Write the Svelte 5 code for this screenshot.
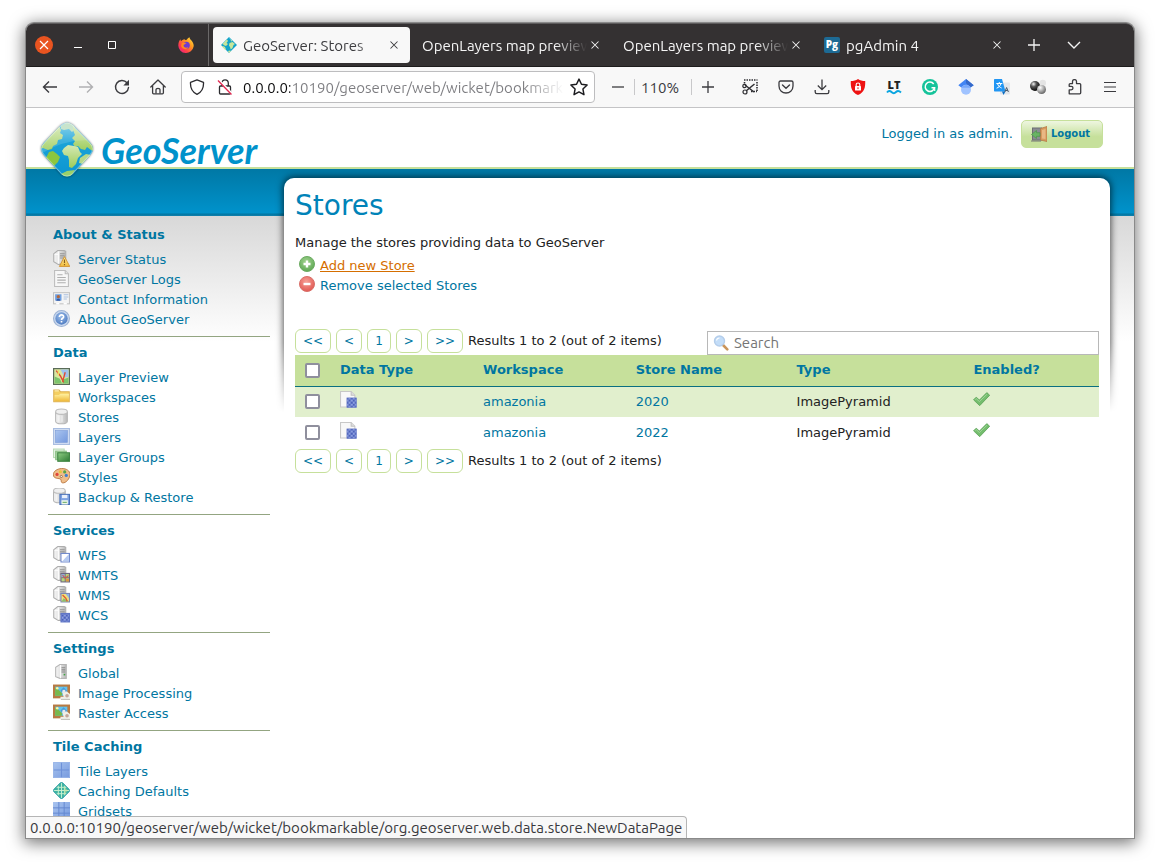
<script>
  const tabs = [
    { title: 'GeoServer: Stores', icon: 'globe', active: true },
    { title: 'OpenLayers map preview', icon: null, active: false },
    { title: 'OpenLayers map preview', icon: null, active: false },
    { title: 'pgAdmin 4', icon: 'pg', active: false }
  ];

  const navButtons = [
    { icon: 'back', label: 'Back' },
    { icon: 'forward', label: 'Forward' },
    { icon: 'reload', label: 'Reload' },
    { icon: 'home', label: 'Home' }
  ];

  const extensions = [
    { icon: 'snip', label: 'Screenshot' },
    { icon: 'pocket', label: 'Pocket' },
    { icon: 'download', label: 'Downloads' },
    { icon: 'blocker', label: 'Blocker' },
    { icon: 'lt', label: 'Language check' },
    { icon: 'grammar', label: 'Grammar' },
    { icon: 'scholar', label: 'Scholar' },
    { icon: 'translate', label: 'Translate' },
    { icon: 'balls', label: 'Molecules' },
    { icon: 'puzzle', label: 'Extensions' },
    { icon: 'menu', label: 'Menu' }
  ];

  const sections = [
    {
      title: 'About & Status',
      items: [
        ['status', 'Server Status'],
        ['logs', 'GeoServer Logs'],
        ['contact', 'Contact Information'],
        ['help', 'About GeoServer']
      ]
    },
    {
      title: 'Data',
      items: [
        ['preview', 'Layer Preview'],
        ['folder', 'Workspaces'],
        ['database', 'Stores'],
        ['layer', 'Layers'],
        ['groups', 'Layer Groups'],
        ['palette', 'Styles'],
        ['backup', 'Backup & Restore']
      ]
    },
    {
      title: 'Services',
      items: [
        ['wfs', 'WFS'],
        ['wmts', 'WMTS'],
        ['wms', 'WMS'],
        ['wcs', 'WCS']
      ]
    },
    {
      title: 'Settings',
      items: [
        ['server', 'Global'],
        ['image', 'Image Processing'],
        ['image', 'Raster Access']
      ]
    },
    {
      title: 'Tile Caching',
      items: [
        ['tiles', 'Tile Layers'],
        ['cache', 'Caching Defaults'],
        ['grid', 'Gridsets']
      ]
    }
  ];

  const stores = [
    { workspace: 'amazonia', name: '2020', type: 'ImagePyramid' },
    { workspace: 'amazonia', name: '2022', type: 'ImagePyramid' }
  ];

  const pages = ['<<', '<', '1', '>', '>>'];
</script>

{#snippet icon(name, size = 16)}
  <svg class="icon" width={size} height={size} viewBox="0 0 16 16" aria-hidden="true"><use href={'#i-' + name} /></svg>
{/snippet}

{#snippet pager()}
  <nav class="pager" aria-label="Pages">
    {#each pages as page}
      <button type="button">{page}</button>
    {/each}
    <span>Results 1 to 2 (out of 2 items)</span>
  </nav>
{/snippet}

<svg class="sprite" width="0" height="0" aria-hidden="true">
  <defs>
    <linearGradient id="g-fox" x1="1" y1="0" x2="0" y2="1">
      <stop offset="0" stop-color="#fff04a" /><stop offset=".35" stop-color="#ff9a1f" /><stop offset=".7" stop-color="#ff3a4c" /><stop offset="1" stop-color="#e0209a" />
    </linearGradient>
    <linearGradient id="g-sea" x1="0" y1="0" x2="0" y2="1">
      <stop offset="0" stop-color="#7fd0ea" /><stop offset=".35" stop-color="#1aa3d8" /><stop offset="1" stop-color="#0a94d0" />
    </linearGradient>
    <linearGradient id="g-land" x1="0" y1="0" x2="0" y2="1">
      <stop offset="0" stop-color="#d5e9b4" /><stop offset="1" stop-color="#9ccc5a" />
    </linearGradient>
    <linearGradient id="g-grey" x1="0" y1="0" x2="1" y2="0">
      <stop offset="0" stop-color="#f6f6f6" /><stop offset=".5" stop-color="#dedede" /><stop offset="1" stop-color="#b8b8b8" />
    </linearGradient>
    <linearGradient id="g-gold" x1="0" y1="0" x2="0" y2="1">
      <stop offset="0" stop-color="#fff0a0" /><stop offset="1" stop-color="#efb93a" />
    </linearGradient>
    <linearGradient id="g-blue" x1="0" y1="0" x2="1" y2="1">
      <stop offset="0" stop-color="#a9c4ef" /><stop offset="1" stop-color="#7599de" />
    </linearGradient>
    <linearGradient id="g-green" x1="0" y1="0" x2="1" y2="1">
      <stop offset="0" stop-color="#8fce83" /><stop offset="1" stop-color="#2d7a34" />
    </linearGradient>
    <radialGradient id="g-help" cx=".45" cy=".35" r=".7">
      <stop offset="0" stop-color="#9bbdea" /><stop offset="1" stop-color="#4a78bf" />
    </radialGradient>
    <radialGradient id="g-add" cx=".45" cy=".35" r=".7">
      <stop offset="0" stop-color="#a2d38f" /><stop offset="1" stop-color="#5aa551" />
    </radialGradient>
    <radialGradient id="g-del" cx=".45" cy=".35" r=".7">
      <stop offset="0" stop-color="#f6a096" /><stop offset="1" stop-color="#e0544e" />
    </radialGradient>
    <radialGradient id="g-black" cx=".35" cy=".3" r=".7">
      <stop offset="0" stop-color="#f5f5f5" /><stop offset=".4" stop-color="#555" /><stop offset="1" stop-color="#080808" />
    </radialGradient>
    <radialGradient id="g-silver" cx=".35" cy=".3" r=".8">
      <stop offset="0" stop-color="#fff" /><stop offset=".5" stop-color="#aaa" /><stop offset="1" stop-color="#555" />
    </radialGradient>
    <pattern id="p-check" width="4" height="4" patternUnits="userSpaceOnUse">
      <rect width="4" height="4" fill="#8c9fdf" /><rect width="2" height="2" fill="#4d62bb" /><rect x="2" y="2" width="2" height="2" fill="#4d62bb" />
    </pattern>
    <g id="tower">
      <path d="M4.500.500h6l1.500.7v12.300H5L.7 11V3.500z" fill="url(#g-grey)" stroke="#adadad" />
      <path d="M5 1.500v11.500M1.500 4h3" stroke="#fff" stroke-width="1" />
      <path d="M6.500 3.500h4.500M6.500 5.500h4.500M6.500 7.500h4.500" stroke="#959595" />
    </g>
    <g id="drum">
      <path d="M2.500 3.500v9c0 3.200 11 3.200 11 0v-9" fill="url(#g-grey)" stroke="#b5b5b5" />
      <ellipse cx="8" cy="3.500" rx="5.500" ry="2.500" fill="#efefef" stroke="#bdbdbd" />
      <path d="M5.500 7v6M8.500 7v6" stroke="#fff" opacity=".6" />
    </g>

    <symbol id="i-x" viewBox="0 0 16 16"><path d="M4 4l8 8M12 4l-8 8" stroke="currentColor" fill="none" stroke-width="1.200" /></symbol>
    <symbol id="i-min" viewBox="0 0 16 16"><path d="M4 10.500h8" stroke="#fff" /></symbol>
    <symbol id="i-max" viewBox="0 0 16 16"><path d="M4.500 4.500h7v7h-7z" stroke="#fff" fill="none" /></symbol>
    <symbol id="i-fox" viewBox="0 0 16 16">
      <path d="M11.500.3c.2 2 1.500 2.400 2.700 4.200 1 1.500 1.700 3 1.400 5A7.700 7.700 0 0 1 .3 8.500C.3 6 1 4 2.500 2.300c0 .8.200 1.400.6 1.900.7-.9 2-1.400 2.800-1.900C6.500 1.800 7.300 3 8 3.200 9.500 2.500 9.300 1.300 11.500.3z" fill="url(#g-fox)" />
      <circle cx="8.300" cy="8.300" r="3.500" fill="#6f3bd2" />
      <path d="M3.800 6.200c1.700-1 3.500-.7 4.800.1-1.400.2-1.700 1.200-3 1.600-.3 2.500 2.700 3.500 4.700 2.100-1 3.300-6.700 2.600-7.200-.9z" fill="#ff8a20" />
    </symbol>
    <symbol id="i-globe" viewBox="0 0 16 16">
      <path d="M8 0l8 8-8 8-8-8z" fill="#12a3c9" />
      <path d="M3 5l3-2.500 1 1.500-1.500 2L7 7 5 9 3 8.200 1.500 6.800zM2 9l2 1 1 2.500-.8.500L1 9.500zM8.500 6l3-1 2.500 2-1.500 1-1 3-1.800 1.500L9 10 8 8.500zM9.500 2l2 2-1.500.5zM7 14l2-.5 1 .5-2 2z" fill="#c9e69a" />
      <path d="M8 .5l3.300 3.300M4 4.200L1 7.400" stroke="#7fd3e5" stroke-width=".8" />
    </symbol>
    <symbol id="i-pg" viewBox="0 0 16 16">
      <rect width="16" height="16" rx="2" fill="#1d6a94" />
      <text x="8" y="10.500" text-anchor="middle" font-family="Open Sans, sans-serif" font-weight="800" font-size="10" fill="#fff">Pg</text>
    </symbol>
    <symbol id="i-plus" viewBox="0 0 16 16"><path d="M8 2v12M2 8h12" stroke="currentColor" stroke-width="1.300" /></symbol>
    <symbol id="i-minus" viewBox="0 0 16 16"><path d="M2 8h12" stroke="currentColor" stroke-width="1.300" /></symbol>
    <symbol id="i-chevron" viewBox="0 0 16 16"><path d="M2 5l6 6 6-6" stroke="currentColor" fill="none" stroke-width="1.400" /></symbol>
    <symbol id="i-back" viewBox="0 0 16 16"><path d="M15 8H1.500M7 2.500L1.500 8 7 13.500" stroke="#3b3b3f" fill="none" stroke-width="1.400" /></symbol>
    <symbol id="i-forward" viewBox="0 0 16 16"><path d="M1 8h13.500M9 2.500L14.500 8 9 13.500" stroke="#b0b0b2" fill="none" stroke-width="1.400" /></symbol>
    <symbol id="i-reload" viewBox="0 0 16 16">
      <path d="M13 3.800A6.500 6.500 0 1 0 14.500 8.500" stroke="#3b3b3f" fill="none" stroke-width="1.400" stroke-linecap="round" />
      <path d="M15 .8v5.700H9.300z" fill="#3b3b3f" />
    </symbol>
    <symbol id="i-home" viewBox="0 0 16 16">
      <path d="M.8 8L8 1l7.200 7M2.600 6.500v7.300c0 .7.300 1 1 1h8.800c.7 0 1-.3 1-1V6.500" stroke="#3b3b3f" fill="none" stroke-width="1.300" stroke-linejoin="round" stroke-linecap="round" />
      <path d="M6 14.500v-4c0-1.500 4-1.500 4 0v4" stroke="#3b3b3f" fill="none" stroke-width="1.300" />
    </symbol>
    <symbol id="i-shield" viewBox="0 0 16 16"><path d="M8 .8l6.500 2.500c.3 5-1.500 9.700-6.500 12C3 13 1.200 8.300 1.500 3.300z" stroke="#2b2b2f" fill="none" stroke-width="1.300" stroke-linejoin="round" /></symbol>
    <symbol id="i-lock" viewBox="0 0 16 16">
      <path d="M4.800 7V4c0-4.200 6.500-4.200 6.500 0v3M3.500 7h9c.7 0 1 .3 1 1v6c0 .7-.3 1-1 1h-9c-.7 0-1-.3-1-1V8c0-.7.300-1 1-1z" stroke="#2b2b2f" fill="none" stroke-width="1.300" />
      <path d="M2 1.300l13 13.500" stroke="#fff" stroke-width="2.400" /><path d="M1 1.500L14.500 15.500" stroke="#e22850" stroke-width="1.300" />
    </symbol>
    <symbol id="i-star" viewBox="0 0 16 16"><path d="M8 1l2.200 4.600 5 .7-3.700 3.500.9 5L8 12.400l-4.400 2.400.9-5L.8 6.300l5-.7z" stroke="#1b1b1f" fill="none" stroke-width="1.300" stroke-linejoin="round" /></symbol>
    <symbol id="i-snip" viewBox="0 0 16 16">
      <path d="M2 1h13.500M15 3v9M2.500 3v3M9 12.500h6" stroke="#2f2f33" stroke-width="1.600" stroke-dasharray="1.500 1" fill="none" />
      <path d="M3 6l9 7M12.500 5L4 12" stroke="#2f2f33" stroke-width="1.500" />
      <circle cx="2.500" cy="7" r="1.700" fill="none" stroke="#2f2f33" stroke-width="1.200" /><circle cx="3" cy="13" r="2" fill="none" stroke="#2f2f33" stroke-width="1.200" />
    </symbol>
    <symbol id="i-pocket" viewBox="0 0 16 16">
      <path d="M2.500 2h11c.9 0 1.500.6 1.500 1.500V7c0 9.300-14 9.300-14 0V3.500C1 2.600 1.600 2 2.500 2z" stroke="#3b3b3f" fill="none" stroke-width="1.300" />
      <path d="M4.500 6L8 9.200 11.500 6" stroke="#3b3b3f" fill="none" stroke-width="1.400" stroke-linecap="round" />
    </symbol>
    <symbol id="i-download" viewBox="0 0 16 16"><path d="M8 .5v10M3.800 6.500L8 10.700l4.200-4.200M1.200 11v2c0 1 .6 1.600 1.600 1.600h10.400c1 0 1.600-.6 1.600-1.600v-2" stroke="#3b3b3f" fill="none" stroke-width="1.300" /></symbol>
    <symbol id="i-blocker" viewBox="0 0 16 16">
      <path d="M8 0c2 1.500 4.500 2 7.200 2 .3 6-.7 11.500-7.200 14C1.500 13.500.5 8 .8 2 3.500 2 6 1.500 8 0z" fill="#ee1212" />
      <rect x="5" y="7" width="6" height="4.500" rx=".5" fill="#fff" /><path d="M6.200 7V5.500c0-2 3.600-2 3.600 0V7" stroke="#fff" fill="none" stroke-width="1.100" /><path d="M8 8.300v1.800" stroke="#e11" />
    </symbol>
    <symbol id="i-lt" viewBox="0 0 16 16">
      <text x="8" y="9.500" text-anchor="middle" font-family="Open Sans, sans-serif" font-weight="800" font-size="11" fill="#222">LT</text>
      <path d="M1 13.500c1.500-2 3-2 4.500-.5s3 1.500 4.500 0 3-1.500 5 .5" stroke="#0aa5e0" stroke-width="1.900" fill="none" />
    </symbol>
    <symbol id="i-grammar" viewBox="0 0 16 16">
      <circle cx="8" cy="8" r="8" fill="#15c39a" /><path d="M11.700 5A4.700 4.700 0 1 0 12.500 8.700H9.500" stroke="#fff" fill="none" stroke-width="1.500" /><path d="M12.700 8.500v3.500" stroke="#fff" stroke-width="1.200" />
    </symbol>
    <symbol id="i-scholar" viewBox="0 0 16 16">
      <path d="M8 0L.3 6.200l3 2.300h9.400l3-2.300z" fill="#4285f4" /><path d="M8 0l7.700 6.200L12 8.500 8 4z" fill="#3569c9" />
      <circle cx="8" cy="10.700" r="5" fill="#a0c3ff" /><path d="M3.400 8.800C5 5 11 5 12.600 8.800z" fill="#76a7fa" />
    </symbol>
    <symbol id="i-translate" viewBox="0 0 16 16">
      <rect x="6" y="3.500" width="10" height="12" rx="1" fill="#e3e6ea" /><path d="M0 1c0-.6.4-1 1-1h7l3.500 12.500H1c-.6 0-1-.4-1-1z" fill="#2196f3" /><path d="M8 12.500h3.500L9.500 16z" fill="#0d6fc4" />
      <path d="M2.300 4.500h6M5.300 3v1.500M7 4.500c-.6 2.500-2.500 4-4.400 4.700M3.500 4.700C4 6.700 6 8.500 7.600 9" stroke="#fff" fill="none" stroke-width="1" />
      <path d="M10.800 13L12.600 8.500l1.800 4.500M11.400 11.500h2.400" stroke="#4a5a6a" fill="none" />
    </symbol>
    <symbol id="i-balls" viewBox="0 0 16 16">
      <circle cx="12.800" cy="4" r="3.200" fill="#e4e4e4" /><circle cx="5" cy="7" r="5" fill="url(#g-black)" /><circle cx="11.500" cy="10.500" r="4.500" fill="url(#g-silver)" />
    </symbol>
    <symbol id="i-puzzle" viewBox="0 0 16 16"><path d="M2.700 15.200h10.500c.6 0 1-.4 1-1V6c0-.6-.4-1-1-1H10V3c0-2.700-4-2.700-4 0v2H3.700c-.6 0-1 .4-1 1v1.700h2c2.400 0 2.400 3.600 0 3.600h-2z" transform="translate(.5 -.4)" stroke="#3b3b3f" fill="none" stroke-width="1.300" stroke-linejoin="round" /></symbol>
    <symbol id="i-menu" viewBox="0 0 16 16"><path d="M2 3.500h12M2 8h12M2 12.500h12" stroke="#3b3b3f" stroke-width="1.200" /></symbol>

    <symbol id="i-status" viewBox="0 0 16 16">
      <use href="#tower" /><path d="M10.800 6.200l5 9.300H6z" fill="url(#g-gold)" stroke="#d29538" stroke-width=".9" stroke-linejoin="round" /><path d="M10.800 9v3.300M10.800 13.200v1.200" stroke="#8a5c1a" stroke-width="1.100" />
    </symbol>
    <symbol id="i-logs" viewBox="0 0 16 16">
      <path d="M1.500.500h10l3 3v12h-13z" fill="#f7f7f7" stroke="#bdbdbd" /><path d="M11.500.500v3h3" fill="#e2e2e2" stroke="#bdbdbd" />
      <path d="M4 4.500h5M4 7h8M4 9.500h8M4 12h8" stroke="#b0b0b0" />
    </symbol>
    <symbol id="i-contact" viewBox="0 0 16 16">
      <rect x=".5" y="2.500" width="15" height="10.500" fill="#f4f4f4" stroke="#c3c3c3" /><rect x="2" y="4" width="6" height="6" fill="#6f9fe0" /><circle cx="5" cy="6.300" r="1.500" fill="#b5683a" /><path d="M3 10c.5-2.500 3.500-2.500 4 0z" fill="#3159a5" />
      <path d="M10 4.500h4.500M10 6.500h4.500M10 8.500h3" stroke="#a9bfde" /><path d="M3 13h3M10 13h3" stroke="#fff" stroke-width="1.500" />
    </symbol>
    <symbol id="i-help" viewBox="0 0 16 16">
      <circle cx="8" cy="8" r="7.500" fill="#c9d8ee" stroke="#9db3d4" /><circle cx="8" cy="8" r="5.800" fill="url(#g-help)" />
      <path d="M6 6.500c0-2.600 4.200-2.400 4 0-.1 1.300-2 1.300-2 2.800M8 10.300v1.500" stroke="#fff" stroke-width="1.500" fill="none" />
    </symbol>
    <symbol id="i-preview" viewBox="0 0 16 16">
      <rect x=".5" y=".5" width="15" height="15" fill="#d8e6a0" stroke="#5a6b58" stroke-width="1.300" /><path d="M7 1.500h7.500v7L11 9z" fill="#9fc2ee" /><path d="M1.500 8l5 2 2 4.500h-7z" fill="#7cc46c" /><path d="M9 11l5.500-2v5.500H9z" fill="#7cc46c" />
      <path d="M3 2.500l4 5 3 6M11.500 4l-2.500 9" stroke="#e04b32" stroke-width="1.300" fill="none" /><path d="M5 2v5" stroke="#f0e060" stroke-width="1.200" />
    </symbol>
    <symbol id="i-folder" viewBox="0 0 16 16">
      <path d="M.7 2h5l1.300 1.500h8.300V13H.7z" fill="#f4cf62" stroke="#ddb257" /><path d="M1.500 12.500V6.500h4L7 5.500h8v7z" fill="url(#g-gold)" /><path d="M1.500 2.700h4" stroke="#fff2b8" />
    </symbol>
    <symbol id="i-database" viewBox="0 0 16 16"><use href="#drum" /></symbol>
    <symbol id="i-layer" viewBox="0 0 16 16"><rect x=".5" y=".5" width="15" height="15" fill="#d3dff3" stroke="#a9bde0" /><rect x="2.500" y="2.500" width="11" height="11" fill="url(#g-blue)" stroke="#7b9cd8" stroke-width=".6" /></symbol>
    <symbol id="i-groups" viewBox="0 0 16 16">
      <rect x=".5" y="1" width="10" height="8" fill="#e6f4e4" stroke="#b9dab5" /><rect x="2.500" y="3" width="10" height="8" fill="#a6d3a0" stroke="#8cc086" /><rect x="4.500" y="4.500" width="11" height="8" fill="url(#g-green)" stroke="#3f8443" />
    </symbol>
    <symbol id="i-palette" viewBox="0 0 16 16">
      <path d="M8 .5c4.500-.3 8 2.200 8 5.500 0 4-4 8.500-7 8-2-.4-.8-2.500-1.800-3.500C6 9.500.5 10.500.3 6.500.2 3 4 .7 8 .5z" fill="#efbd8a" stroke="#b5713b" stroke-width=".8" />
      <circle cx="3.800" cy="6" r="1.500" fill="#e0453a" /><circle cx="7" cy="3.500" r="1.500" fill="#e9c53a" /><circle cx="11" cy="3.700" r="1.500" fill="#55a548" /><circle cx="12.500" cy="7" r="1.500" fill="#3f7fd0" /><circle cx="7.800" cy="8" r="1" fill="#fff" stroke="#7a4a20" stroke-width=".6" />
    </symbol>
    <symbol id="i-backup" viewBox="0 0 16 16">
      <g transform="translate(-2 -1)"><use href="#drum" /></g><rect x="6.500" y="6" width="9" height="9.500" fill="#7fa3e2" stroke="#4a71b8" /><rect x="8.500" y="6.500" width="5" height="3" fill="#e9f0fb" /><rect x="8" y="11.500" width="6" height="4" fill="#eef8e8" /><path d="M9 13.500h4" stroke="#6aab6a" />
    </symbol>
    <symbol id="i-wfs" viewBox="0 0 16 16"><use href="#tower" /><rect x="7.500" y="7" width="8" height="8" fill="#fff" stroke="#7189cc" /><path d="M15 7.500v7H8.500z" fill="#b5c9f0" /></symbol>
    <symbol id="i-wmts" viewBox="0 0 16 16"><use href="#tower" /><rect x="7.500" y="7" width="8" height="8" fill="#b6d47c" stroke="#6e6580" /><path d="M8 7.500h3v3H8z" fill="#8dabe0" /><path d="M12 12h3v2.500h-3z" fill="#df9640" /><path d="M8 11h7.500M11.500 7.500V15" stroke="#6d6480" stroke-width=".8" /><path d="M9 8.500l2.500 3 3-2.500" stroke="#d8544a" fill="none" /></symbol>
    <symbol id="i-wms" viewBox="0 0 16 16"><use href="#tower" /><rect x="7.500" y="7" width="8" height="8" fill="#efe07a" stroke="#7b86b5" /><path d="M12 7.500h3v4z" fill="#8fb4e6" /><path d="M8 14.500l2-3 5 3z" fill="#8cc06e" /><path d="M9 8.500l3 3 1.500 3" stroke="#df5a32" stroke-width="1.200" fill="none" /></symbol>
    <symbol id="i-wcs" viewBox="0 0 16 16"><use href="#tower" /><rect x="7.500" y="7" width="8" height="8" fill="url(#p-check)" stroke="#5f75c6" /></symbol>
    <symbol id="i-server" viewBox="0 0 16 16"><path d="M6.500.500h6v13H6.500L2.500 12V3z" fill="url(#g-grey)" stroke="#b5b5b5" /><path d="M7 1v12.500" stroke="#fff" /><path d="M8 3.500h3.500M8 5.500h3.500M8 7.500h3.500" stroke="#8a8a8a" /><path d="M10 10h1.500" stroke="#3ea342" stroke-width="1.500" /></symbol>
    <symbol id="i-image" viewBox="0 0 16 16">
      <rect y=".5" width="16" height="13" fill="#b87a42" /><rect x="2" y="2.500" width="11.500" height="8.500" fill="#63c3ee" /><path d="M2 11V3l4 3 3 3-1 2z" fill="#79b84c" /><path d="M7 6l3-3 3 3v3H9z" fill="#4a9ad8" /><circle cx="4" cy="4" r="1.200" fill="#fff3a2" />
      <path d="M8.500 7h4.500l3 2.500V15H7v-3h3z" fill="#efefe9" /><circle cx="13.200" cy="11" r="1.700" fill="#c3a79a" /><rect x="9" y="5.500" width="2.500" height="3" fill="#e8e8e8" /><path d="M7.500 14.500h8.500" stroke="#c2c2bb" />
    </symbol>
    <symbol id="i-tiles" viewBox="0 0 16 16"><rect width="16" height="15" fill="url(#g-blue)" /><path d="M8 0v15M0 7.500h16" stroke="#6d90d8" /><path d="M.500.500h15v14H.5z" fill="none" stroke="#9bb6e8" stroke-width=".8" /></symbol>
    <symbol id="i-cache" viewBox="0 0 16 16">
      <path d="M6.800.8q1.200-1 2.400 0l6 6q1 1.200 0 2.400l-6 6q-1.200 1-2.400 0l-6-6q-1-1.200 0-2.400z" fill="#3fb3a2" stroke="#2597a5" stroke-width=".7" /><path d="M8 1v14M1 8h14M5 3.500v9M11 3.500v9M3.500 5h9M3.500 11h9" stroke="#c6f0d0" stroke-width=".9" />
      <path d="M10 4l4 4-3.500 4z" fill="#c9e69a" opacity=".5" />
    </symbol>
    <symbol id="i-grid" viewBox="0 0 16 16"><rect width="16" height="16" fill="url(#g-blue)" /><path d="M5.500 0v16M10.500 0v16M0 5.500h16M0 10.500h16" stroke="#6487d0" stroke-width=".9" /></symbol>
    <symbol id="i-add" viewBox="0 0 16 16"><circle cx="8" cy="8" r="7.500" fill="url(#g-add)" stroke="#6cab62" /><path d="M8 4.500v7M4.500 8h7" stroke="#fff" stroke-width="2.400" /></symbol>
    <symbol id="i-remove" viewBox="0 0 16 16"><circle cx="8" cy="8" r="7.500" fill="url(#g-del)" stroke="#d8706a" /><path d="M4.500 8h7" stroke="#fff" stroke-width="2.400" /></symbol>
    <symbol id="i-raster" viewBox="0 0 16 16"><path d="M.500.500h10l3.500 3.500v11H.5z" fill="#f8f8f8" stroke="#c8c8c8" /><path d="M10.500.500V4H14" fill="#ddd" stroke="#c2c2c2" /><rect x="6.500" y="6.500" width="9" height="9" fill="url(#p-check)" stroke="#6a7cc8" stroke-width=".6" /></symbol>
    <symbol id="i-check" viewBox="0 0 16 16"><path d="M.5 8.300L3 5.800l3 2.700L13 1.500l2.700 2.500L6.300 13.800z" fill="#74bd6d" stroke="#559e52" stroke-width=".7" stroke-linejoin="round" /><path d="M2 8.200l1-1 3 2.700 7-6.700" stroke="#a8dba0" fill="none" stroke-width=".8" /></symbol>
    <symbol id="i-search" viewBox="0 0 16 16"><path d="M10 10l4.300 4.300" stroke="#c9945a" stroke-width="2.600" stroke-linecap="round" /><circle cx="6.500" cy="6" r="5" fill="#c3ddf8" stroke="#b4cdea" stroke-width="1.400" /><path d="M3.500 5.500c.3-1.500 1.500-2.500 3-2.500" stroke="#fff" fill="none" stroke-width="1.200" /></symbol>
    <symbol id="i-door" viewBox="0 0 16 16"><rect x="1.500" y="2" width="9" height="12" fill="#8a8d92" stroke="#6c6f74" /><path d="M9.500 2.500L16 .500v15l-6.500-1.500z" fill="#d79a5e" stroke="#b57a45" stroke-width=".8" /><path d="M11 4l3.500-1v10L11 12.500z" fill="#e9b884" /><path d="M9 6.700H5.500V4.500L.5 8.500l5 4v-2.200H9z" fill="#69b464" stroke="#4b964a" stroke-width=".7" /><path d="M0 15h10" stroke="#777" /></symbol>
  </defs>
</svg>

<div class="desktop">
  <div class="window">
    <div class="titlebar">
      <div class="controls">
        <button type="button" class="close" aria-label="Close window">{@render icon('x')}</button>
        <button type="button" aria-label="Minimize">{@render icon('min')}</button>
        <button type="button" aria-label="Maximize">{@render icon('max')}</button>
        <span class="fox">{@render icon('fox')}</span>
      </div>
      <div class="tabs">
        {#each tabs as tab}
          <div class="tab" class:active={tab.active}>
            {#if tab.icon}{@render icon(tab.icon)}{/if}
            <span class="tab-title">{tab.title}</span>
            <button type="button" aria-label="Close tab">{@render icon('x', 14)}</button>
          </div>
        {/each}
      </div>
      <button type="button" class="tool" aria-label="New tab">{@render icon('plus')}</button>
      <button type="button" class="tool" aria-label="List tabs">{@render icon('chevron')}</button>
    </div>

    <div class="toolbar">
      {#each navButtons as b}
        <button type="button" class="bar-button" aria-label={b.label}>{@render icon(b.icon)}</button>
      {/each}
      <div class="urlbar">
        {@render icon('shield')}
        {@render icon('lock')}
        <input aria-label="Address" value="0.0.0.0:10190/geoserver/web/wicket/bookmarkable/org.geoserver.web" />
        <button type="button" aria-label="Bookmark">{@render icon('star', 18)}</button>
      </div>
      <div class="zoom">
        <button type="button" aria-label="Zoom out">{@render icon('minus')}</button>
        <button type="button" class="level">110%</button>
        <button type="button" aria-label="Zoom in">{@render icon('plus')}</button>
      </div>
      {#each extensions as b}
        <button type="button" class="bar-button" aria-label={b.label}>{@render icon(b.icon)}</button>
      {/each}
    </div>

    <div class="page">
      <header>
        <a class="brand" href="#home">
          <svg class="logo" width="56" height="58" viewBox="0 0 56 58" aria-hidden="true">
            <defs>
              <clipPath id="logo-clip"><path d="M22 4q6-5 12 0L51 21.500q6 6.500 0 13L34 53q-6 5-12 0L5 34.500q-6-6.500 0-13z" /></clipPath>
            </defs>
            <g clip-path="url(#logo-clip)">
              <rect width="56" height="58" fill="url(#g-sea)" />
              <path d="M0 28L20 5l2 4-1 3 3 2-1 4-4 1-1 4-4 2-1 3-4 1-5-2z" fill="url(#g-land)" />
              <path d="M10 31l4-1 4 3 3 3-2 5-4 4-8-8z" fill="#8cc63f" />
              <path d="M22 5l6-4 7 3 1 4-3 3-3-3-5 1-3-1z" fill="#bfe0c4" />
              <path d="M34 5l20 20 2 6-4-2-4-3-2 3-4-1-3-3-3 1-2-3 2-3-3-3 3-3-2-5z" fill="url(#g-land)" />
              <path d="M25 27l4-3 6 1 4 1 2 5 2 2-4 4-2 6-4 4-3-1v-7l-1-4-4-1-2-4z" fill="url(#g-land)" />
              <path d="M41 37l6-4 5 1-8 9-4-1z" fill="#b5d98a" />
              <path d="M22 53l6-3 8-1-5 8h-6z" fill="#9ad06a" />
              <path d="M0 0h56v20Q28 16 0 34z" fill="#fff" opacity=".15" />
              <path d="M22 4q6-5 12 0L51 21.500q6 6.500 0 13L34 53q-6 5-12 0L5 34.500q-6-6.500 0-13z" fill="none" stroke="#fff" stroke-width="2" opacity=".35" />
            </g>
          </svg>
          <span>GeoServer</span>
        </a>
        <div class="login">
          <span>Logged in as admin.</span>
          <button type="button">{@render icon('door')}Logout</button>
        </div>
      </header>

      <div class="body">
        <aside>
          {#each sections as section}
            <section>
              <h2>{section.title}</h2>
              <ul>
                {#each section.items as [glyph, label]}
                  <li>{@render icon(glyph, 17)}<a href="#{label}">{label}</a></li>
                {/each}
              </ul>
            </section>
          {/each}
        </aside>

        <div class="main-wrap">
          <div class="shade"><div></div></div>
          <main>
            <h1>Stores</h1>
            <p>Manage the stores providing data to GeoServer</p>
            <ul class="actions">
              <li>{@render icon('add')}<a class="hot" href="#add">Add new Store</a></li>
              <li>{@render icon('remove')}<a href="#remove">Remove selected Stores</a></li>
            </ul>
            <div class="list-top">
              {@render pager()}
              <label class="search">
                {@render icon('search')}
                <input type="text" placeholder="Search" aria-label="Search" />
              </label>
            </div>
            <table>
              <thead>
                <tr>
                  <th class="c-check"><input type="checkbox" aria-label="Select all" /></th>
                  <th class="c-data">Data Type</th>
                  <th class="c-work">Workspace</th>
                  <th class="c-name">Store Name</th>
                  <th class="c-type">Type</th>
                  <th>Enabled?</th>
                </tr>
              </thead>
              <tbody>
                {#each stores as s}
                  <tr>
                    <td class="c-check"><input type="checkbox" aria-label="Select {s.name}" /></td>
                    <td>{@render icon('raster', 17)}</td>
                    <td><a href="#{s.workspace}">{s.workspace}</a></td>
                    <td><a href="#{s.name}">{s.name}</a></td>
                    <td>{s.type}</td>
                    <td>{@render icon('check', 17)}</td>
                  </tr>
                {/each}
              </tbody>
            </table>
            {@render pager()}
          </main>
        </div>
      </div>
      <div class="statusbar">0.0.0.0:10190/geoserver/web/wicket/bookmarkable/org.geoserver.web.data.store.NewDataPage</div>
    </div>
  </div>
</div>

<style>
  :global(body) {
    margin: 0;
    background: #fff;
  }
  * {
    box-sizing: border-box;
  }
  button,
  input {
    font: inherit;
    color: inherit;
    margin: 0;
  }
  button {
    padding: 0;
    border: 0;
    background: none;
    display: inline-flex;
    align-items: center;
    justify-content: center;
    flex: none;
  }
  ul {
    list-style: none;
    margin: 0;
    padding: 0;
  }
  h1,
  h2,
  p {
    margin: 0;
  }
  .icon {
    flex: none;
    display: block;
  }
  .sprite {
    position: absolute;
  }

  .desktop {
    height: 100vh;
    padding: 23px 26px 29px;
    display: flex;
    overflow: hidden;
  }
  .window {
    flex: 1;
    min-width: 0;
    display: flex;
    flex-direction: column;
    border-radius: 8px 8px 0 0;
    background: #fff;
    box-shadow: 0 0 0 1px #8a8a8a, 0 3px 16px 2px rgba(0, 0, 0, 0.55);
    font-family: Ubuntu, 'Noto Sans', sans-serif;
    font-size: 15px;
  }

  .titlebar {
    height: 44px;
    flex: none;
    display: flex;
    align-items: center;
    gap: 4px;
    background: #343132;
    border-top: 1px solid #5d5b5c;
    border-bottom: 1px solid #1d1c1c;
    border-radius: 8px 8px 0 0;
    color: #f4f4f4;
  }
  .controls {
    align-self: stretch;
    width: 183px;
    flex: none;
    display: flex;
    align-items: center;
    gap: 16px;
    padding: 0 14px 0 9px;
    border-right: 1px solid #6b6969;
  }
  .controls button {
    width: 18px;
    height: 18px;
  }
  .controls .close {
    background: #e95420;
    border-radius: 50%;
    color: #fff;
  }
  .fox {
    margin-left: auto;
  }
  .tabs {
    flex: 1;
    min-width: 0;
    display: flex;
    gap: 4px;
  }
  .tab {
    flex: 0 1 197px;
    min-width: 0;
    height: 36px;
    padding: 0 8px;
    display: flex;
    align-items: center;
    gap: 6px;
    border-radius: 4px;
  }
  .tab.active {
    background: #f8f8f8;
    color: #3c3c3f;
  }
  .tab-title {
    flex: 1;
    min-width: 0;
    margin-right: -6px;
    padding-top: 1px;
    overflow: hidden;
    white-space: nowrap;
    mask-image: linear-gradient(to left, transparent, #000 32px);
  }
  .tab button {
    width: 16px;
    height: 16px;
  }
  .tool {
    width: 32px;
    height: 32px;
    margin-right: 4px;
  }
  .tool:last-child {
    margin-right: 44px;
  }

  .toolbar {
    height: 41px;
    flex: none;
    display: flex;
    align-items: center;
    padding: 0 6px;
    background: #f8f8f8;
    border-bottom: 1px solid #c4c4c6;
    color: #3b3b3f;
  }
  .bar-button {
    width: 36px;
    height: 32px;
  }
  .urlbar {
    flex: 1;
    min-width: 0;
    height: 32px;
    margin-left: 5px;
    padding: 0 6px 0 7px;
    display: flex;
    align-items: center;
    gap: 12px;
    background: #fff;
    border: 1px solid #bdbdbf;
    border-radius: 4px;
  }
  .urlbar input {
    flex: 1;
    min-width: 0;
    margin-left: -2px;
    margin-right: -6px;
    padding: 0;
    border: 0;
    outline: 0;
    font-size: 15px;
    color: transparent;
    background: linear-gradient(to right, #0c0c0d 47px, #7c7c80 47px);
    background-clip: text;
    mask-image: linear-gradient(to left, transparent, #000 40px);
  }
  .zoom {
    display: flex;
    align-items: center;
    margin: 0 8px 0 7px;
  }
  .zoom button {
    width: 32px;
    height: 16px;
  }
  .zoom .level {
    width: 58px;
    padding-right: 6px;
    border: solid #c8c8ca;
    border-width: 0 1px;
  }

  .page {
    position: relative;
    flex: 1;
    min-height: 0;
    overflow: hidden;
    background: #fff;
    color: #222;
    font: 13px/20px Verdana, 'DejaVu Sans', sans-serif;
  }
  a {
    color: #0076a1;
    text-decoration: none;
  }
  header {
    position: relative;
    z-index: 1;
    height: 61px;
    padding: 12px 31px 0 13px;
    display: flex;
    align-items: flex-start;
    justify-content: space-between;
    border-bottom: 2px solid #c6e09b;
  }
  .brand {
    display: flex;
    align-items: center;
    gap: 6px;
    font: italic bold 36px/60px Lato, sans-serif;
    color: #0092cb;
  }
  .logo {
    filter: drop-shadow(0 0 1px rgba(0, 0, 0, 0.5));
  }
  .login {
    display: flex;
    align-items: center;
    gap: 8px;
    color: #0076a1;
  }
  .login button {
    width: 82px;
    height: 28px;
    gap: 4px;
    padding-right: 3px;
    border: 1px solid #c6e09b;
    border-radius: 5px;
    background: linear-gradient(#eef6e0, #c6e09b 60%);
    color: #0076a1;
    font-size: 10px;
    font-weight: bold;
  }

  .body {
    min-height: 100%;
    display: flex;
    background:
      linear-gradient(#0078a5, #0092cb 44px, #0076a1 45px, #1181ae 47px) 0 0 / 100% 47px no-repeat,
      linear-gradient(#d8d8d8, #fff) 0 47px / 100% 126px no-repeat;
  }
  aside {
    width: 258px;
    flex: none;
    padding: 50px 14px 0 22px;
  }
  section {
    padding: 0 5px 6px;
  }
  section + section {
    border-top: 1px solid #93a581;
  }
  h2 {
    font-size: 13px;
    line-height: 31px;
    color: #0076a1;
  }
  section li {
    display: flex;
    gap: 8px;
    height: 20px;
  }

  .main-wrap {
    position: relative;
    flex: 1;
    min-width: 0;
    margin: 9px 24px 0 0;
  }
  .shade {
    position: absolute;
    inset: -9px -12px auto;
    height: 248px;
    padding: 9px 12px 0;
    overflow: hidden;
    mask-image: linear-gradient(#000 70%, transparent 98%);
  }
  .shade div {
    height: 300px;
    border-radius: 10px;
    box-shadow: 0 0 7px 1px rgba(0, 0, 0, 0.65);
  }
  main {
    position: relative;
    padding: 11px 11px 24px;
    border-radius: 10px;
    background: #fff;
  }
  h1 {
    font-size: 28px;
    font-weight: normal;
    line-height: 34px;
    color: #0083b8;
  }
  p {
    margin-top: 10px;
  }
  .actions {
    margin: 3px 0 33px;
    padding-left: 4px;
  }
  .actions li {
    display: flex;
    gap: 5px;
    height: 20px;
  }
  .hot {
    color: #d56e00;
    text-decoration: underline;
  }
  .list-top {
    display: flex;
    justify-content: space-between;
    height: 26px;
  }
  .pager {
    display: flex;
    align-items: center;
    gap: 5px;
    height: 24px;
    line-height: 22px;
  }
  .pager button {
    height: 24px;
    padding: 0 7px;
    border: 1px solid #c6e09b;
    border-radius: 6px;
    font-size: 12px;
    color: #0076a1;
  }
  .search {
    width: 392px;
    height: 24px;
    margin-top: 2px;
    padding: 0 5px;
    display: flex;
    align-items: center;
    gap: 5px;
    border: 1px solid #b8b8b8;
    background: #fff;
  }
  .search input {
    flex: 1;
    min-width: 0;
    padding: 0;
    border: 0;
    outline: 0;
    font: 15px/20px Ubuntu, 'Noto Sans', sans-serif;
  }
  .search input::placeholder {
    color: #757575;
  }

  table {
    width: 100%;
    margin-bottom: 1px;
    table-layout: fixed;
    border-collapse: collapse;
  }
  th,
  td {
    height: 31px;
    padding: 0 5px;
    text-align: left;
  }
  th {
    background: #c6e09b;
    border-bottom: 1px solid #0a6f80;
    color: #0076a1;
  }
  td .icon {
    margin-bottom: 4px;
  }
  tbody tr:nth-child(odd) {
    background: #e1efcd;
  }
  .c-check {
    width: 40px;
    padding-left: 10px;
  }
  .c-data {
    width: 143px;
  }
  .c-work {
    width: 19%;
  }
  .c-name {
    width: 20%;
  }
  .c-type {
    width: 22%;
  }
  input[type='checkbox'] {
    appearance: none;
    display: block;
    width: 15px;
    height: 15px;
    border: 2px solid #8f8f9d;
    border-radius: 2px;
    background: #fff;
  }

  .statusbar {
    position: absolute;
    z-index: 2;
    left: 0;
    bottom: 0;
    height: 22px;
    padding: 0 4px;
    border: solid #b5b5b5;
    border-width: 1px 1px 0 0;
    border-radius: 0 4px 0 0;
    background: #f8f8f8;
    color: #38383d;
    font: 15px/21px Ubuntu, 'Noto Sans', sans-serif;
    white-space: nowrap;
  }
</style>
